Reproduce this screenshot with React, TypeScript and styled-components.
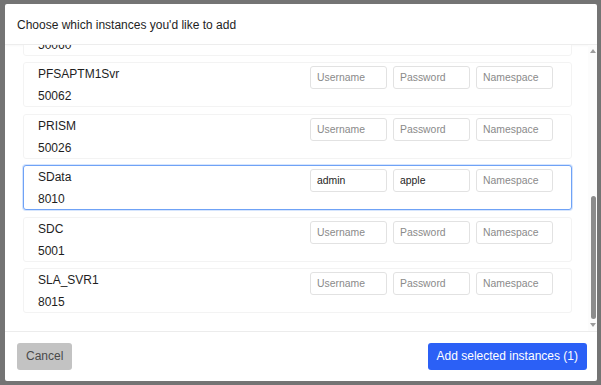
import { useLayoutEffect, useRef } from 'react'
import styled, { createGlobalStyle } from 'styled-components'

interface Instance {
  name: string
  port: string
  username?: string
  password?: string
  selected?: boolean
}

const instances: Instance[] = [
  { name: 'ENSEMBLE', port: '56773' },
  { name: 'HSAP', port: '57772' },
  { name: 'IRIS', port: '51773' },
  { name: 'MYAPP', port: '52773' },
  { name: 'OPS_SVR', port: '50040' },
  { name: 'PFSAPTM0Svr', port: '50060' },
  { name: 'PFSAPTM1Svr', port: '50062' },
  { name: 'PRISM', port: '50026' },
  { name: 'SData', port: '8010', username: 'admin', password: 'apple', selected: true },
  { name: 'SDC', port: '5001' },
  { name: 'SLA_SVR1', port: '8015' },
]

const GlobalStyle = createGlobalStyle`
  html, body {
    margin: 0;
    padding: 0;
    background: #747474;
  }
  body {
    font-family: "Liberation Sans", Arial, sans-serif;
  }
`

const Backdrop = styled.div`
  width: 601px;
  height: 385px;
  box-sizing: border-box;
  padding: 4px 4px 4px 5px;
  background: #747474;
`

const Dialog = styled.div`
  height: 100%;
  display: flex;
  flex-direction: column;
  background: #fff;
  border-radius: 2px;
  overflow: hidden;
`

const Header = styled.div`
  height: 41px;
  flex-shrink: 0;
  display: flex;
  align-items: center;
  padding: 1px 12px 0;
  box-sizing: border-box;
  border-bottom: 1px solid #ededed;
  box-shadow: 0 1px 2px rgba(0, 0, 0, 0.03);
  font-size: 12px;
  color: #1e1e1e;
`

const BodyRow = styled.div`
  flex: 1;
  min-height: 0;
  display: flex;
`

const Body = styled.div`
  flex: 1;
  overflow-y: auto;
  padding: 18px 16px 18px 18px;
  display: flex;
  flex-direction: column;
  gap: 6.5px;
  scrollbar-width: none;

  &::-webkit-scrollbar {
    display: none;
  }
`

// drawn by hand: the headless page hides native scrollbars
const Rail = styled.div`
  width: 9px;
  flex-shrink: 0;
  display: flex;
  flex-direction: column;
  background: #fcfcfc;
`

const Arrow = styled.div<{ $down?: boolean }>`
  height: 12px;
  flex-shrink: 0;
  display: flex;
  align-items: center;
  justify-content: center;
  padding-left: 1px;

  &::after {
    content: '';
    width: 0;
    height: 0;
    border-left: 3px solid transparent;
    border-right: 3px solid transparent;
    ${({ $down }) => ($down ? 'border-top' : 'border-bottom')}: 4px solid #9c9c9c;
  }
`

const Track = styled.div`
  flex: 1;
  display: flex;
  flex-direction: column;
  justify-content: flex-end;
  align-items: flex-end;
  padding-right: 1px;
`

const Thumb = styled.div`
  width: 5px;
  height: 123px;
  border-radius: 3px;
  background: #8c8c8c;
`

const Card = styled.div<{ $selected?: boolean }>`
  flex-shrink: 0;
  height: 45px;
  box-sizing: border-box;
  display: flex;
  justify-content: space-between;
  padding: 3px 18px 0 14px;
  border: 1px solid ${({ $selected }) => ($selected ? '#6fa2f6' : '#f3f3f3')};
  box-shadow: ${({ $selected }) => ($selected ? '0 0 0 1px rgba(120, 170, 250, 0.3)' : 'none')};
  border-radius: 3px;
  background: #fff;
`

const Info = styled.div`
  display: flex;
  flex-direction: column;
  gap: 8px;
  padding-top: 1px;
  font-size: 12px;
  color: #1e1e1e;
  line-height: 14px;
`

const Fields = styled.div`
  display: flex;
  gap: 6px;
`

const Field = styled.input`
  width: 77px;
  height: 23px;
  box-sizing: border-box;
  padding: 0 6px;
  border: 1px solid #e2e2e2;
  border-radius: 3px;
  font-family: "Liberation Sans", Arial, sans-serif;
  font-size: 10.4px;
  color: #1e1e1e;
  outline: none;

  &::placeholder {
    color: #8a8a8a;
  }
`

const Footer = styled.div`
  height: 50px;
  flex-shrink: 0;
  box-sizing: border-box;
  display: flex;
  align-items: center;
  justify-content: space-between;
  padding: 0 10px 1px 12px;
  border-top: 1px solid #ececec;
`

const Button = styled.button<{ $primary?: boolean }>`
  height: 27px;
  border: none;
  border-radius: 3px;
  padding: 0 9px;
  font-family: "Liberation Sans", Arial, sans-serif;
  font-size: 12px;
  background: ${({ $primary }) => ($primary ? '#2b60f6' : '#c3c3c3')};
  color: ${({ $primary }) => ($primary ? '#fff' : '#4a4a4a')};
`

export default function App() {
  const bodyRef = useRef<HTMLDivElement>(null)

  useLayoutEffect(() => {
    const el = bodyRef.current
    if (el) el.scrollTop = el.scrollHeight
  }, [])

  const selectedCount = instances.filter((i) => i.selected).length

  return (
    <>
      <GlobalStyle />
      <Backdrop>
        <Dialog>
          <Header>Choose which instances you'd like to add</Header>
          <BodyRow>
            <Body ref={bodyRef}>
              {instances.map((inst) => (
                <Card key={inst.name} $selected={inst.selected}>
                  <Info>
                    <span>{inst.name}</span>
                    <span>{inst.port}</span>
                  </Info>
                  <Fields>
                    <Field placeholder="Username" defaultValue={inst.username} />
                    <Field placeholder="Password" defaultValue={inst.password} />
                    <Field placeholder="Namespace" />
                  </Fields>
                </Card>
              ))}
            </Body>
            <Rail>
              <Arrow />
              <Track>
                <Thumb />
              </Track>
              <Arrow $down />
            </Rail>
          </BodyRow>
          <Footer>
            <Button>Cancel</Button>
            <Button $primary>Add selected instances ({selectedCount})</Button>
          </Footer>
        </Dialog>
      </Backdrop>
    </>
  )
}
